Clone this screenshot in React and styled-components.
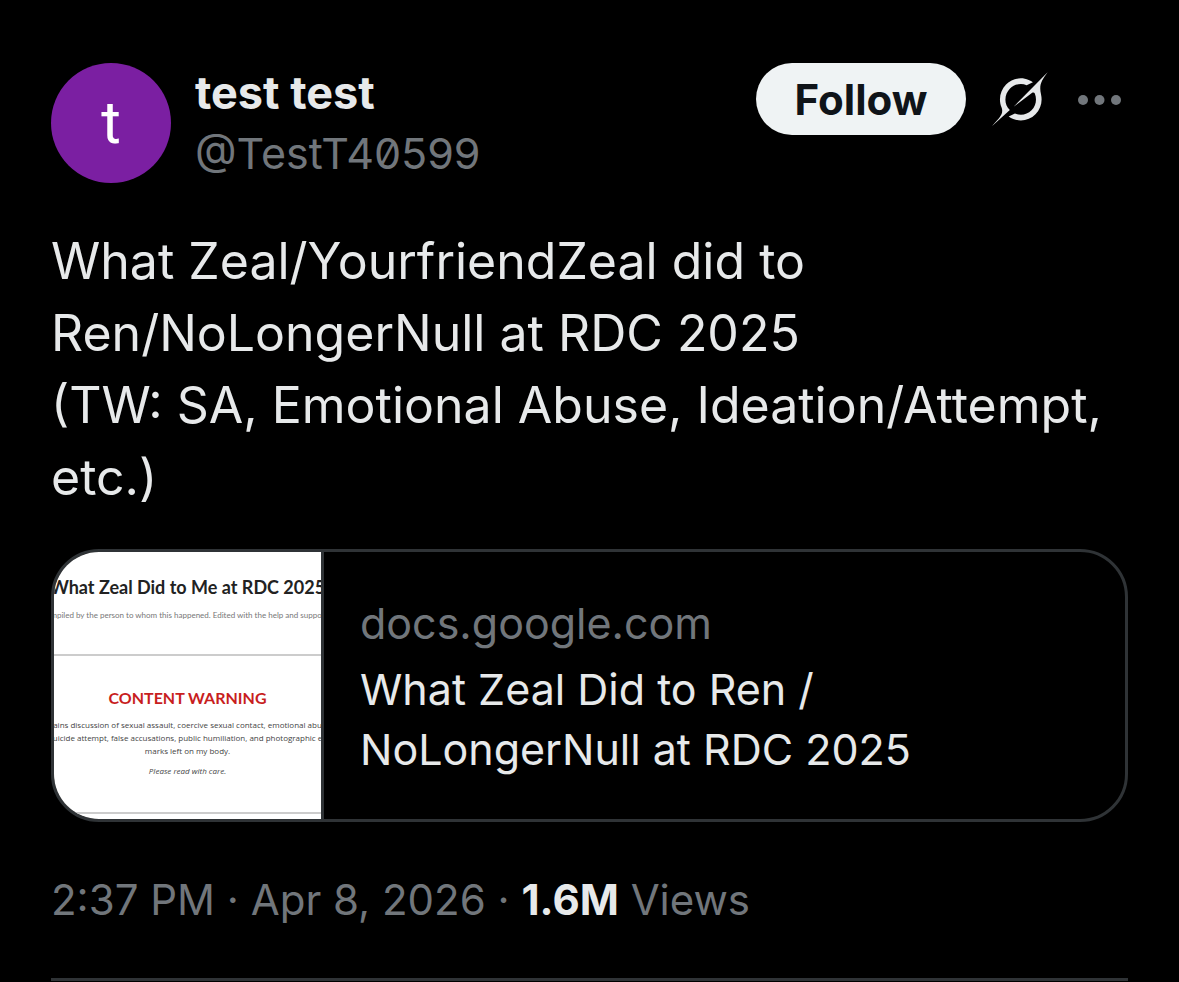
import React from "react";
import styled, { createGlobalStyle } from "styled-components";

const Global = createGlobalStyle`
  * { box-sizing: border-box; }
  body { margin: 0; background: #000; color: #e7e9ea; font-family: Inter, "Noto Sans", sans-serif; }
  button { font-family: inherit; cursor: pointer; }
`;
const Post = styled.article`padding: 63px 51px 0;`;
const Header = styled.header`display: flex; align-items: flex-start; gap: 24px;`;
const Avatar = styled.a`
  width: 120px; height: 120px; flex: none; border-radius: 50%;
  background: #7b1fa2; color: #fff; text-decoration: none;
  display: flex; align-items: center; justify-content: center;
  font: 400 60px/120px Roboto, sans-serif;
`;
const Names = styled.div`flex: 1; display: flex; flex-direction: column;`;
const Name = styled.a`
  color: #e7e9ea; text-decoration: none; white-space: nowrap;
  font-size: 45px; line-height: 60px; font-weight: 700;
`;
const Handle = styled(Name)`
  color: #71767b; font-size: 43px; font-weight: 400; font-variant-numeric: slashed-zero;
`;
const Actions = styled.div`display: flex; align-items: center; gap: 26px;`;
const Follow = styled.button`
  width: 210px; height: 72px; border: 0; border-radius: 36px; padding: 0;
  background: #eff3f4; color: #0f1419; font-size: 42px; font-weight: 700;
`;
const IconButton = styled.button`
  border: 0; padding: 0; background: none; display: flex; color: ${(p) => p.$color};
`;
const Body = styled.p`
  margin: 42px 0 36px; font-size: 50px; line-height: 72px; white-space: pre-line;
`;
const Card = styled.a`
  display: flex; height: 273px; border: 3px solid #2f3336; border-radius: 48px;
  overflow: hidden; color: #e7e9ea; text-decoration: none;
`;
const Thumb = styled.div`
  width: 270px; flex: none; background: #fff; border-right: 3px solid #2f3336;
  overflow: hidden; display: flex; flex-direction: column; align-items: center;
  font-family: Lato, sans-serif; color: #444; text-align: center; white-space: nowrap;
`;
const ThumbTitle = styled.div`margin-top: 22px; color: #222; font-size: 18px; line-height: 26px; font-weight: 700;`;
const ThumbText = styled.div`font-family: "Open Sans", sans-serif; font-size: 8px; line-height: 13px;`;
const Compiled = styled.div`margin-top: 9px; color: #777; font-size: 8px; line-height: 13px;`;
const Rule = styled.div`align-self: stretch; height: 2px; flex: none; background: #ccc; margin-top: ${(p) => p.$top}px;`;
const Warning = styled.div`margin: 29px 0 7px; color: #c81e1e; font-size: 16px; line-height: 26px; font-weight: 700;`;
const Care = styled(ThumbText)`margin-top: 7px; font-style: italic;`;
const CardText = styled.div`
  flex: 1; padding: 0 36px; display: flex; flex-direction: column; justify-content: center;
  font-size: 43px; line-height: 60px;
`;
const Domain = styled.span`color: #71767b; margin-bottom: 6px;`;
const CardTitle = styled.span`white-space: pre-line;`;
const Meta = styled.footer`
  margin-top: 48px; padding-bottom: 48px; border-bottom: 3px solid #2f3336;
  color: #71767b; font-size: 42px; line-height: 60px;
`;
const Count = styled.strong`color: #e7e9ea; font-weight: 700;`;

export default function App() {
  return (
    <>
      <Global />
      <Post>
        <Header>
          <Avatar href="#profile">t</Avatar>
          <Names>
            <Name href="#profile">test test</Name>
            <Handle href="#profile">@TestT40599</Handle>
          </Names>
          <Actions>
            <Follow type="button">Follow</Follow>
            <IconButton type="button" aria-label="Grok" $color="#e7e9ea">
              <svg width="56" height="54" viewBox="0 0 33 32" fill="currentColor" aria-hidden="true">
                <path d="M12.745 20.54l10.97-8.19c.539-.4 1.307-.244 1.564.38 1.349 3.288.746 7.241-1.938 9.955-2.683 2.714-6.417 3.31-9.83 1.954l-3.728 1.745c5.347 3.697 11.84 2.782 15.898-1.324 3.219-3.255 4.216-7.692 3.284-11.693l.008.009c-1.351-5.878.332-8.227 3.782-13.031L33 0l-4.54 4.59v-.014L12.743 20.544m-2.263 1.987c-3.837-3.707-3.175-9.446.1-12.755 2.42-2.449 6.388-3.448 9.852-1.979l3.72-1.737c-.67-.49-1.53-1.017-2.515-1.387-4.455-1.854-9.789-.931-13.41 2.728-3.483 3.523-4.579 8.94-2.697 13.561 1.405 3.454-.899 5.898-3.22 8.364C1.49 30.2.666 31.074 0 32l10.478-9.466" />
              </svg>
            </IconButton>
            <IconButton type="button" aria-label="More" $color="#71767b">
              <svg width="54" height="60" viewBox="0 0 54 60" fill="currentColor" aria-hidden="true">
                <circle cx="9" cy="31" r="5" /><circle cx="25.5" cy="31" r="5" /><circle cx="42" cy="31" r="5" />
              </svg>
            </IconButton>
          </Actions>
        </Header>
        <Body>{"What Zeal/YourfriendZeal did to\nRen/NoLongerNull at RDC 2025\n(TW: SA, Emotional Abuse, Ideation/Attempt,\netc.)"}</Body>
        <Card href="#document">
          <Thumb>
            <ThumbTitle>What Zeal Did to Me at RDC 2025</ThumbTitle>
            <Compiled>mpiled by the person to whom this happened. Edited with the help and suppor</Compiled>
            <Rule $top={32} />
            <Warning>CONTENT WARNING</Warning>
            <ThumbText>ains discussion of sexual assault, coercive sexual contact, emotional abu</ThumbText>
            <ThumbText>uicide attempt, false accusations, public humiliation, and photographic e</ThumbText>
            <ThumbText>marks left on my body.</ThumbText>
            <Care>Please read with care.</Care>
            <Rule $top={35} />
          </Thumb>
          <CardText>
            <Domain>docs.google.com</Domain>
            <CardTitle>{"What Zeal Did to Ren /\nNoLongerNull at RDC 2025"}</CardTitle>
          </CardText>
        </Card>
        <Meta>2:37 PM · Apr 8, 2026 · <Count>1.6M</Count> Views</Meta>
      </Post>
    </>
  );
}
